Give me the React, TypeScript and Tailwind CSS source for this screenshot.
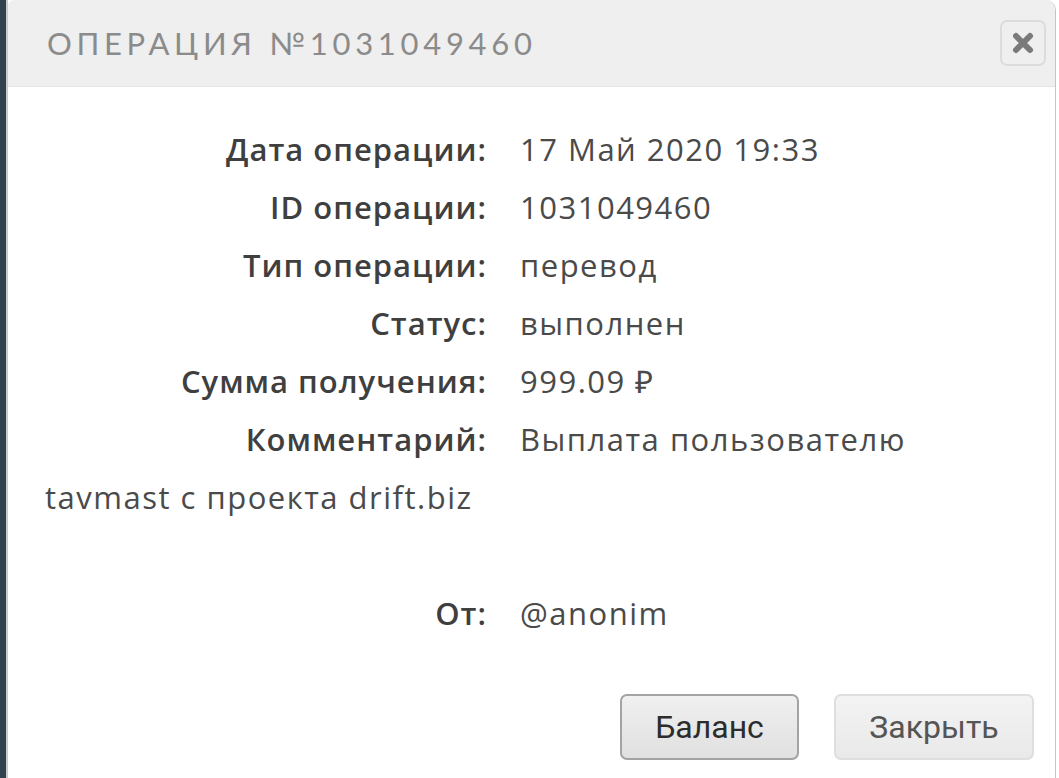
import React from "react";

const rows: [string, string][] = [
  ["Дата операции:", "17 Май 2020 19:33"],
  ["ID операции:", "1031049460"],
  ["Тип операции:", "перевод"],
  ["Статус:", "выполнен"],
  ["Сумма получения:", "999.09 ₽"],
  ["Комментарий:", "Выплата пользователю"],
];

const Row = ({ label, value }: { label: string; value: string }) => (
  <div className="flex">
    <span className="w-[450px] text-right font-semibold tracking-[1px] text-[#3f3f3f]">{label}</span>
    <span className="ml-[33px]">{value}</span>
  </div>
);

const App = () => {
  return (
    <div className="flex h-[778px] w-[1059px] overflow-hidden bg-white">
      <div className="w-[6px] flex-none bg-[#2f424d]" />
      <div className="w-[2px] flex-none bg-[#c9cbcc]" />
      <div className="flex flex-1 flex-col rounded-tl-[6px] rounded-tr-[10px] border-r border-[#c4c4c4] bg-white">
        <div className="flex h-[87px] flex-none items-center justify-between rounded-tl-[6px] rounded-tr-[10px] border-b border-[#e4e4e4] bg-[#efefef] pl-[39px] pr-[9px]">
          <h1 className="text-[31px] tracking-[4.7px] text-[#8b8b8b] font-['Lato',sans-serif]">
            ОПЕРАЦИЯ №1031049460
          </h1>
          <button className="flex h-[46px] w-[46px] items-center justify-center rounded-[7px] border-2 border-[#dcdcdc] bg-[#efefef]">
            <svg width="22" height="22" viewBox="0 0 22 22">
              <path d="M4 4 L18 18 M18 4 L4 18" stroke="#7a7a7a" strokeWidth="6" strokeLinecap="round" />
            </svg>
          </button>
        </div>
        <div className="flex-1 pl-[29px] pt-[33px] text-[31px] leading-[58px] tracking-[1.5px] text-[#4a4a4a] font-['Open_Sans',sans-serif]">
          {rows.map(([label, value]) => (
            <Row key={label} label={label} value={value} />
          ))}
          <p className="pl-[8px]">tavmast с проекта drift.biz</p>
          <div className="h-[58px]" />
          <Row label="От:" value="@anonim" />
          <div className="mt-[52px] flex justify-end gap-[35px] pr-[21px] tracking-normal font-['Roboto',sans-serif]">
            <button className="h-[66px] w-[179px] rounded-[7px] border-2 border-[#a3a3a3] bg-gradient-to-b from-[#f0f0f0] to-[#e0e0e0] text-[32px] text-[#2c2c2c]">
              Баланс
            </button>
            <button className="h-[66px] w-[200px] rounded-[7px] border-2 border-[#dedede] bg-gradient-to-b from-[#f3f3f3] to-[#e9e9e9] text-[32px] text-[#555]">
              Закрыть
            </button>
          </div>
        </div>
      </div>
      <div className="w-[3px] flex-none bg-white" />
    </div>
  );
};

export default App;
